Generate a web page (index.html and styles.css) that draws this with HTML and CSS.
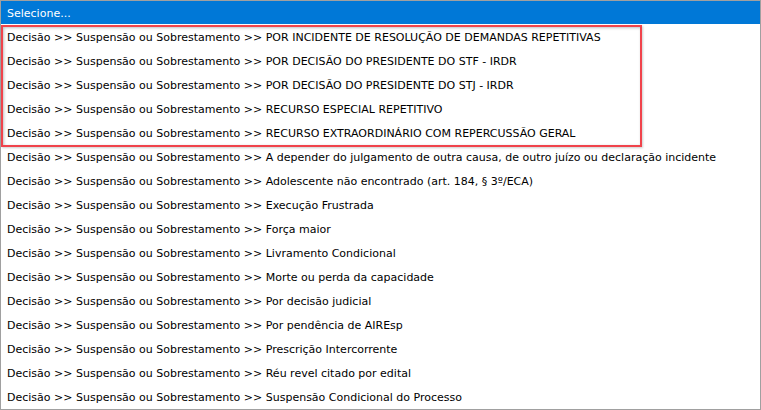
FILE: index.html
```html
<!DOCTYPE html>
<html lang="pt-BR">
<head>
  <meta charset="UTF-8" />
  <title>Selecione...</title>
  <link rel="stylesheet" href="styles.css">
</head>
<body>
  <div class="listbox">
    <div class="item selected">Selecione...</div>
    <div class="highlight">
      <div class="item">Decisão &gt;&gt; Suspensão ou Sobrestamento &gt;&gt; POR INCIDENTE DE RESOLUÇÃO DE DEMANDAS REPETITIVAS</div>
      <div class="item">Decisão &gt;&gt; Suspensão ou Sobrestamento &gt;&gt; POR DECISÃO DO PRESIDENTE DO STF - IRDR</div>
      <div class="item">Decisão &gt;&gt; Suspensão ou Sobrestamento &gt;&gt; POR DECISÃO DO PRESIDENTE DO STJ - IRDR</div>
      <div class="item">Decisão &gt;&gt; Suspensão ou Sobrestamento &gt;&gt; RECURSO ESPECIAL REPETITIVO</div>
      <div class="item">Decisão &gt;&gt; Suspensão ou Sobrestamento &gt;&gt; RECURSO EXTRAORDINÁRIO COM REPERCUSSÃO GERAL</div>
    </div>
    <div class="item">Decisão &gt;&gt; Suspensão ou Sobrestamento &gt;&gt; A depender do julgamento de outra causa, de outro juízo ou declaração incidente</div>
    <div class="item">Decisão &gt;&gt; Suspensão ou Sobrestamento &gt;&gt; Adolescente não encontrado (art. 184, § 3º/ECA)</div>
    <div class="item">Decisão &gt;&gt; Suspensão ou Sobrestamento &gt;&gt; Execução Frustrada</div>
    <div class="item">Decisão &gt;&gt; Suspensão ou Sobrestamento &gt;&gt; Força maior</div>
    <div class="item">Decisão &gt;&gt; Suspensão ou Sobrestamento &gt;&gt; Livramento Condicional</div>
    <div class="item">Decisão &gt;&gt; Suspensão ou Sobrestamento &gt;&gt; Morte ou perda da capacidade</div>
    <div class="item">Decisão &gt;&gt; Suspensão ou Sobrestamento &gt;&gt; Por decisão judicial</div>
    <div class="item">Decisão &gt;&gt; Suspensão ou Sobrestamento &gt;&gt; Por pendência de AIREsp</div>
    <div class="item">Decisão &gt;&gt; Suspensão ou Sobrestamento &gt;&gt; Prescrição Intercorrente</div>
    <div class="item">Decisão &gt;&gt; Suspensão ou Sobrestamento &gt;&gt; Réu revel citado por edital</div>
    <div class="item">Decisão &gt;&gt; Suspensão ou Sobrestamento &gt;&gt; Suspensão Condicional do Processo</div>
  </div>
</body>
</html>
```

FILE: styles.css
```css
body {
  margin: 0;
  background: #ffffff;
  font-family: "DejaVu Sans", sans-serif;
  font-size: 11px;
  color: #000000;
}
.listbox {
  width: 759px;
  height: 408px;
  border: 1px solid #a0a0a0;
  overflow: hidden;
  background: #ffffff;
}
.item {
  box-sizing: border-box;
  height: 24px;
  padding: 2px 0 0 6px;
  line-height: 24px;
  white-space: nowrap;
}
.item.selected {
  height: 23px;
  padding-top: 1px;
  line-height: 23px;
  background: #0078d7;
  color: #ffffff;
  overflow: hidden;
}
.highlight {
  position: relative;
}
.highlight::after {
  content: "";
  position: absolute;
  left: 0;
  top: 1px;
  width: 637px;
  height: 118px;
  border: 2px solid #f0434b;
  box-shadow: inset 1px 1px 3px rgba(0, 0, 0, 0.25), 1px 1px 2px rgba(0, 0, 0, 0.2);
  pointer-events: none;
}
```
